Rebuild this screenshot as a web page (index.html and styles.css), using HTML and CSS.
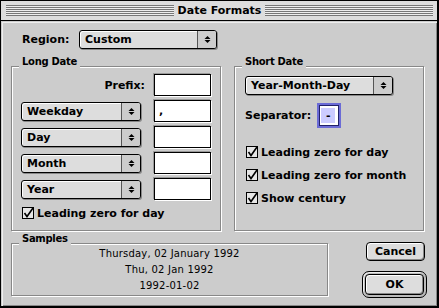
FILE: index.html
```html
<!DOCTYPE html>
<html lang="en">
<head>
  <meta charset="UTF-8">
  <title>Date Formats</title>
  <link rel="stylesheet" href="styles.css">
</head>
<body>

  <div class="window">
    <!-- Title bar -->
    <div class="titlebar">
      <span class="stripes"></span>
      <span class="title">Date Formats</span>
      <span class="stripes"></span>
    </div>

    <div class="content">
      <div class="region-row">
        <span class="region-label">Region:</span>
        <div class="popup region-popup">
          <span class="popup-text">Custom</span>
          <span class="popup-arrows"><svg width="7" height="9" viewBox="0 0 7 9"><polygon points="0.5,4 3.5,1 6.5,4"/><polygon points="0.5,5 6.5,5 3.5,8"/></svg></span>
        </div>
      </div>

      <div class="groups">
        <!-- Long Date -->
        <div class="group long">
          <span class="group-label">Long Date</span>
          <div class="row prefix-row">
            <span>Prefix:</span>
            <div class="field"></div>
          </div>
          <div class="row">
            <div class="popup small-popup">
              <span class="popup-text">Weekday</span>
              <span class="popup-arrows"><svg width="7" height="9" viewBox="0 0 7 9"><polygon points="0.5,4 3.5,1 6.5,4"/><polygon points="0.5,5 6.5,5 3.5,8"/></svg></span>
            </div>
            <div class="field">,</div>
          </div>
          <div class="row">
            <div class="popup small-popup">
              <span class="popup-text">Day</span>
              <span class="popup-arrows"><svg width="7" height="9" viewBox="0 0 7 9"><polygon points="0.5,4 3.5,1 6.5,4"/><polygon points="0.5,5 6.5,5 3.5,8"/></svg></span>
            </div>
            <div class="field"></div>
          </div>
          <div class="row">
            <div class="popup small-popup">
              <span class="popup-text">Month</span>
              <span class="popup-arrows"><svg width="7" height="9" viewBox="0 0 7 9"><polygon points="0.5,4 3.5,1 6.5,4"/><polygon points="0.5,5 6.5,5 3.5,8"/></svg></span>
            </div>
            <div class="field"></div>
          </div>
          <div class="row">
            <div class="popup small-popup">
              <span class="popup-text">Year</span>
              <span class="popup-arrows"><svg width="7" height="9" viewBox="0 0 7 9"><polygon points="0.5,4 3.5,1 6.5,4"/><polygon points="0.5,5 6.5,5 3.5,8"/></svg></span>
            </div>
            <div class="field"></div>
          </div>
          <div class="check long-check">
            <svg width="12" height="12" viewBox="0 0 12 12"><rect x="0.5" y="0.5" width="11" height="11" fill="#e6e6e6" stroke="#000"/><path d="M2.5 6 L5 9.5 L11 1" fill="none" stroke="#000" stroke-width="1.6"/></svg>
            <span>Leading zero for day</span>
          </div>
        </div>

        <!-- Short Date -->
        <div class="group short">
          <span class="group-label">Short Date</span>
          <div class="popup short-popup">
            <span class="popup-text">Year-Month-Day</span>
            <span class="popup-arrows"><svg width="7" height="9" viewBox="0 0 7 9"><polygon points="0.5,4 3.5,1 6.5,4"/><polygon points="0.5,5 6.5,5 3.5,8"/></svg></span>
          </div>
          <div class="sep-row">
            <span>Separator:</span>
            <div class="sep-field"><span class="sep-sel">-</span></div>
          </div>
          <div class="check short-check">
            <svg width="12" height="12" viewBox="0 0 12 12"><rect x="0.5" y="0.5" width="11" height="11" fill="#e6e6e6" stroke="#000"/><path d="M2.5 6 L5 9.5 L11 1" fill="none" stroke="#000" stroke-width="1.6"/></svg>
            <span>Leading zero for day</span>
          </div>
          <div class="check short-check">
            <svg width="12" height="12" viewBox="0 0 12 12"><rect x="0.5" y="0.5" width="11" height="11" fill="#e6e6e6" stroke="#000"/><path d="M2.5 6 L5 9.5 L11 1" fill="none" stroke="#000" stroke-width="1.6"/></svg>
            <span>Leading zero for month</span>
          </div>
          <div class="check short-check">
            <svg width="12" height="12" viewBox="0 0 12 12"><rect x="0.5" y="0.5" width="11" height="11" fill="#e6e6e6" stroke="#000"/><path d="M2.5 6 L5 9.5 L11 1" fill="none" stroke="#000" stroke-width="1.6"/></svg>
            <span>Show century</span>
          </div>
        </div>
      </div>

      <div class="bottom">
        <div class="group samples">
          <span class="group-label">Samples</span>
          <div>Thursday, 02 January 1992</div>
          <div>Thu, 02 Jan 1992</div>
          <div>1992-01-02</div>
        </div>
        <div class="buttons">
          <div class="button cancel">Cancel</div>
          <div class="default-ring">
            <div class="button">OK</div>
          </div>
        </div>
      </div>
    </div>
  </div>

</body>
</html>
```

FILE: styles.css
```css
* {
  margin: 0;
  padding: 0;
  box-sizing: border-box;
}

body {
  background: #ccc;
}

.window {
  width: 439px;
  height: 308px;
  border: 1px solid #000;
  border-right-width: 2px;
  border-bottom-width: 2px;
  display: flex;
  flex-direction: column;
  background: #ccc;
  font-family: "DejaVu Sans", sans-serif;
  font-weight: bold;
  font-size: 11px;
  color: #000;
}

/* title bar */
.titlebar {
  height: 20px;
  border-bottom: 1px solid #000;
  background: #ddd;
  display: flex;
  align-items: center;
  gap: 4px;
  padding: 0 4px 0 5px;
}

.stripes {
  flex: 1;
  height: 11px;
  background: repeating-linear-gradient(to bottom, #777 0 1px, #eee 1px 2px);
}

.title {
  line-height: 19px;
}

.content {
  flex: 1;
  padding: 8px 11px 0 10px;
  box-shadow: inset 1px 1px 0 #ccc, inset 2px 2px 0 #eee, inset -1px -1px 0 #888;
}

/* popups */
.popup {
  display: flex;
  height: 19px;
  border: 1px solid #000;
  border-radius: 3px;
  background: #ddd;
  box-shadow: 1px 1px 0 #888, inset 1px 1px 0 #fff;
}

.popup-text {
  flex: 1;
  padding-left: 5px;
  line-height: 17px;
}

.popup-arrows {
  width: 19px;
  border-left: 1px solid #555;
  border-radius: 0 2px 2px 0;
  background: #ccc;
  display: flex;
  align-items: center;
  justify-content: center;
}

.region-row {
  display: flex;
  align-items: center;
  margin-left: 11px;
  height: 20px;
}

.region-label {
  width: 57px;
}

.region-popup {
  width: 138px;
}

.small-popup {
  width: 120px;
}

.short-popup {
  width: 148px;
}

/* group boxes */
.groups {
  display: flex;
  gap: 13px;
  margin-top: 17px;
}

.group {
  position: relative;
  border: 1px solid #888;
  box-shadow: 1px 1px 0 #fff, inset 1px 1px 0 #fff;
}

.group-label {
  position: absolute;
  top: -11px;
  left: 7px;
  padding: 0 3px;
  background: #ccc;
  font-size: 10px;
  letter-spacing: -0.3px;
  line-height: 12px;
}

.long {
  width: 210px;
  height: 165px;
  padding: 7px 9px 0 9px;
}

.row {
  display: flex;
  align-items: center;
  gap: 13px;
  height: 22px;
  margin-bottom: 4px;
}

.prefix-row {
  justify-content: flex-end;
  gap: 9px;
}

.field {
  width: 57px;
  height: 22px;
  border: 1px solid #000;
  background: #fff;
  box-shadow: -1px -1px 0 #999, 1px 1px 0 #fff;
  padding-left: 4px;
  line-height: 20px;
}

.check {
  display: flex;
  align-items: center;
  gap: 3px;
  height: 12px;
}

.check svg {
  flex: none;
}

.long-check {
  margin: 7px 0 0 1px;
}

.short {
  width: 190px;
  height: 165px;
  padding: 9px 0 0 10px;
}

.sep-row {
  display: flex;
  align-items: center;
  gap: 6px;
  margin-top: 8px;
  height: 25px;
}

.sep-field {
  width: 24px;
  height: 25px;
  border: 2px solid #6b6bd6;
  background: #fff;
  box-shadow: inset 0 0 0 1px #22226a;
  padding: 3px 3px 2px 2px;
}

.sep-sel {
  display: block;
  width: 14px;
  height: 15px;
  background: #ccccff;
  text-align: center;
  line-height: 15px;
}

.short-check {
  margin: 11px 0 0 1px;
}

.sep-row + .short-check {
  margin-top: 18px;
}

/* bottom area */
.bottom {
  display: flex;
  justify-content: space-between;
  margin-top: 11px;
}

.samples {
  width: 317px;
  height: 53px;
  margin-top: 1px;
  padding-top: 2px;
  text-align: center;
  font-weight: normal;
  font-size: 10px;
  line-height: 16px;
  letter-spacing: 0.2px;
}

.samples .group-label {
  font-weight: bold;
  letter-spacing: -0.3px;
}

.buttons {
  width: 65px;
  display: flex;
  flex-direction: column;
  margin-right: -1px;
}

.button {
  width: 59px;
  height: 19px;
  border: 1px solid #000;
  border-radius: 4px;
  background: #ddd;
  box-shadow: inset 1px 1px 0 #fff, inset -1px -1px 0 #888;
  text-align: center;
  line-height: 17px;
}

.cancel {
  margin-left: 4px;
}

.default-ring {
  width: 65px;
  height: 27px;
  margin-top: 10px;
  border: 1px solid #000;
  border-radius: 7px;
  background: #bbb;
  box-shadow: inset 1px 1px 0 #eee;
  padding: 2px;
}

.default-ring .button {
  height: 21px;
  line-height: 19px;
}
```
